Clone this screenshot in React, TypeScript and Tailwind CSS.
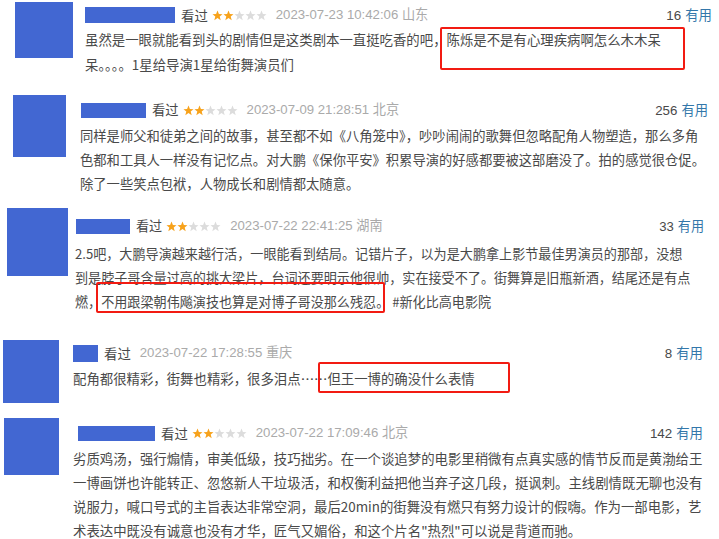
import React from "react";

function Stars() {
  const pts = "5.5,0.5 6.9,4 10.5,4.2 7.7,6.5 8.7,10.2 5.5,8.1 2.3,10.2 3.3,6.5 0.5,4.2 4.1,4";
  return (
    <span className="ml-[4px] inline-flex items-center">
      {[0, 1, 2, 3, 4].map((i) => (
        <svg key={i} width="11" height="11" viewBox="0 0 11 11">
          <polygon points={pts} fill={i < 2 ? "#f7a21b" : "#dcdcdc"} />
        </svg>
      ))}
    </span>
  );
}

type Block = {
  wrap: string;
  avatar: string;
  content: string;
  size: string;
  text: string;
  name: string;
  stars: boolean;
  date: string;
  count: string;
  lines: string[];
  boxes: string[];
};

const blocks: Block[] = [
  {
    wrap: "h-[88px]",
    avatar: "mt-[2px] ml-[15px] w-[58px] h-[56px]",
    content: "ml-[12px] pt-[6px] pr-[7px]",
    size: "text-[13.4px]",
    text: "mt-[3px] leading-[25px]",
    name: "w-[90px] h-[16px]",
    stars: true,
    date: "2023-07-23 10:42:06 山东",
    count: "16",
    lines: [
      "虽然是一眼就能看到头的剧情但是这类剧本一直挺吃香的吧，陈烁是不是有心理疾病啊怎么木木呆",
      "呆。。。。1星给导演1星给街舞演员们",
    ],
    boxes: ["left-[440px] top-[27px] w-[245px] h-[43px]"],
  },
  {
    wrap: "h-[110px]",
    avatar: "mt-[7px] ml-[13px] w-[53px] h-[62px]",
    content: "ml-[14px] pt-[13px] pr-[11px]",
    size: "text-[13.3px]",
    text: "mt-[5px] leading-[24px]",
    name: "w-[65px] h-[15px] ml-[1px]",
    stars: true,
    date: "2023-07-09 21:28:51 北京",
    count: "256",
    lines: [
      "同样是师父和徒弟之间的故事，甚至都不如《八角笼中》，吵吵闹闹的歌舞但忽略配角人物塑造，那么多角",
      "色都和工具人一样没有记忆点。对大鹏《保你平安》积累导演的好感都要被这部磨没了。拍的感觉很仓促。",
      "除了一些笑点包袱，人物成长和剧情都太随意。",
    ],
    boxes: [],
  },
  {
    wrap: "h-[132px]",
    avatar: "mt-[10px] ml-[7px] w-[61px] h-[68px]",
    content: "ml-[7px] pt-[19px] pr-[15px]",
    size: "text-[13.1px]",
    text: "mt-[7px] leading-[24px]",
    name: "w-[54px] h-[15px] ml-[1px]",
    stars: true,
    date: "2023-07-22 22:41:25 湖南",
    count: "33",
    lines: [
      "2.5吧，大鹏导演越来越行活，一眼能看到结局。记错片子，以为是大鹏拿上影节最佳男演员的那部，没想",
      "到是脖子哥含量过高的挑大梁片，台词还要明示他很帅，实在接受不了。街舞算是旧瓶新酒，结尾还是有点",
      "燃，不用跟梁朝伟飚演技也算是对博子哥没那么残忍。 #新化比高电影院",
    ],
    boxes: ["left-[96px] top-[84px] w-[289px] h-[31px]"],
  },
  {
    wrap: "h-[78px]",
    avatar: "mt-[10px] ml-[3px] w-[56px] h-[63px]",
    content: "ml-[14px] pt-[14px] pr-[16px]",
    size: "text-[13.4px]",
    text: "mt-[4px] leading-[24px]",
    name: "w-[25px] h-[17px]",
    stars: false,
    date: "2023-07-22 17:28:55 重庆",
    count: "8",
    lines: ["配角都很精彩，街舞也精彩，很多泪点……但王一博的确没什么表情"],
    boxes: ["left-[318px] top-[32px] w-[192px] h-[31px]"],
  },
  {
    wrap: "h-[131px]",
    avatar: "mt-[10px] ml-[4px] w-[55px] h-[57px]",
    content: "ml-[14px] pt-[16px] pr-[16px]",
    size: "text-[13.4px]",
    text: "mt-[4px] leading-[24px]",
    name: "w-[77px] h-[15px] ml-[5px]",
    stars: true,
    date: "2023-07-22 17:09:46 北京",
    count: "142",
    lines: [
      "劣质鸡汤，强行煽情，审美低级，技巧拙劣。在一个谈追梦的电影里稍微有点真实感的情节反而是黄渤给王",
      "一博画饼也许能转正、忽悠新人干垃圾活，和权衡利益把他当弃子这几段，挺讽刺。主线剧情既无聊也没有",
      "说服力，喊口号式的主旨表达非常空洞，最后20min的街舞没有燃只有努力设计的假嗨。作为一部电影，艺",
      "术表达中既没有诚意也没有才华，匠气又媚俗，和这个片名\"热烈\"可以说是背道而驰。",
    ],
    boxes: [],
  },
];

function Comment({ b }: { b: Block }) {
  return (
    <div className={`relative flex w-full overflow-hidden ${b.wrap}`}>
      <div className={`shrink-0 bg-[#4267d2] ${b.avatar}`} />
      <div className={`flex min-w-0 flex-1 flex-col ${b.content} ${b.size}`}>
        <div className="flex h-[18px] items-center justify-between">
          <div className="flex items-center whitespace-nowrap">
            <span className={`inline-block bg-[#4267d2] ${b.name}`} />
            <span className="ml-[6px] text-[#494949]">看过</span>
            {b.stars && <Stars />}
            <span className="ml-[9px] font-['Liberation_Sans','Noto_Sans_CJK_SC',sans-serif] text-[13.2px] text-[#aaaaaa]">
              {b.date}
            </span>
          </div>
          <div className="whitespace-nowrap">
            <span className="font-['Liberation_Sans','Noto_Sans_CJK_SC',sans-serif] text-[#494949]">{b.count}</span>
            <span className="ml-[4px] text-[#3377aa]">有用</span>
          </div>
        </div>
        <div className={b.text}>
          {b.lines.map((l, i) => (
            <div key={i} className="whitespace-nowrap text-[#494949]">
              {l}
            </div>
          ))}
        </div>
      </div>
      {b.boxes.map((r, i) => (
        <div
          key={i}
          className={`pointer-events-none absolute rounded-[2px] border-2 border-[#f21b12] ${r}`}
        />
      ))}
    </div>
  );
}

export default function App() {
  return (
    <div className="h-[539px] w-[719px] overflow-hidden bg-white font-['Noto_Sans_CJK_SC','Liberation_Sans',sans-serif]">
      {blocks.map((b, i) => (
        <Comment key={i} b={b} />
      ))}
    </div>
  );
}
